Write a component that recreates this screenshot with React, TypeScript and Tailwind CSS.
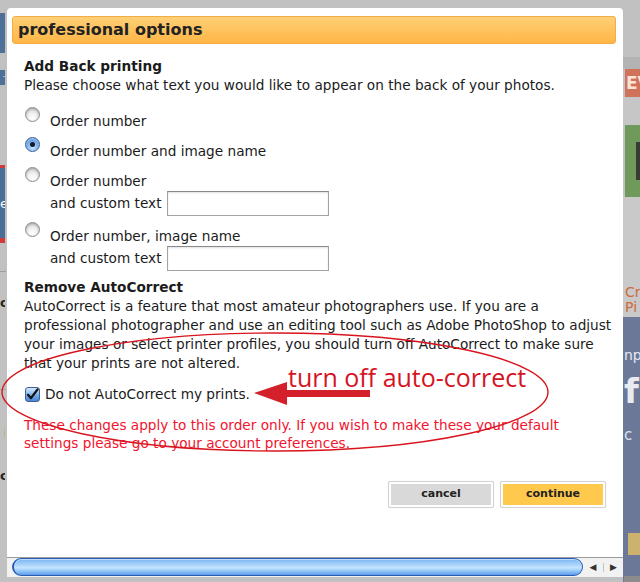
import React from "react";

function Radio({ checked = false }: { checked?: boolean }) {
  if (checked) {
    return (
      <span className="flex h-[15px] w-[15px] shrink-0 items-center justify-center rounded-full border border-[#3d5f95] bg-[radial-gradient(circle_at_50%_75%,#c7e4ff_0%,#7fb6ef_45%,#3f7fd0_100%)] shadow-[inset_0_1px_1px_rgba(255,255,255,0.6)]">
        <span className="h-[5px] w-[5px] rounded-full bg-[#15192a]" />
      </span>
    );
  }
  return (
    <span className="h-[15px] w-[15px] shrink-0 rounded-full border border-[#8c8c8c] bg-[radial-gradient(circle_at_50%_80%,#ffffff_0%,#f1f1f1_40%,#c9c9c9_100%)] shadow-[inset_0_1px_2px_rgba(0,0,0,0.25)]" />
  );
}

function TextBox() {
  return (
    <span className="block h-[25px] w-[162px] border border-[#a3a3a3] border-t-[#8a8a8a] bg-white shadow-[inset_0_1px_2px_rgba(0,0,0,0.12)]" />
  );
}

function Option({ children, checked = false }: { children: React.ReactNode; checked?: boolean }) {
  return (
    <div className="ml-[1px] flex items-start">
      <Radio checked={checked} />
      <div className="ml-[10px] pt-[5px] leading-[19px]">{children}</div>
    </div>
  );
}

function Button({ label, fill }: { label: string; fill: string }) {
  return (
    <div className="h-[27px] w-[106px] rounded-[2px] border border-[#d2d2d2] bg-white p-[2px] shadow-[0_0_1px_rgba(0,0,0,0.15)]">
      <div
        className={`flex h-full w-full items-center justify-center text-[11px] font-bold text-[#222] ${fill}`}
      >
        {label}
      </div>
    </div>
  );
}

function LeftEdge() {
  return (
    <div className="relative flex w-[7px] shrink-0 flex-col overflow-hidden">
      <div className="mt-[13px] h-[40px] w-[5px] bg-[#4d6f98]" />
      <div className="mt-[17px] flex h-[15px] w-[5px] items-center justify-end bg-[#4d6f98] text-[8px] leading-none text-white">
        ·
      </div>
      <div className="mt-[80px] h-[3px] w-[5px] bg-[#d23a3a]" />
      <div className="flex h-[70px] w-[5px] items-center justify-end overflow-hidden bg-[#4b6e97]">
        <span className="-mr-[3px] text-[13px] leading-none text-white">e</span>
      </div>
      <div className="h-[5px] w-[5px] bg-[#d23a3a]" />
      <div className="mt-[28px] h-px w-[6px] bg-[#9e9e9e]" />
      <div className="mt-[24px] w-[5px] overflow-hidden text-right text-[13px] font-bold leading-none text-[#222]">
        <span className="-mr-[4px]">o</span>
      </div>
      <div className="mt-[80px] h-px w-[6px] bg-[#a8a8a8]" />
      <div className="mt-[36px] w-[5px] overflow-hidden text-right text-[13px] leading-none text-[#c9925a]">
        <span className="-mr-[2px]">i</span>
      </div>
      <div className="mt-[30px] w-[5px] overflow-hidden text-right text-[13px] font-bold leading-none text-[#222]">
        <span className="-mr-[4px]">o</span>
      </div>
    </div>
  );
}

function RightEdge() {
  return (
    <div className="flex flex-1 flex-col overflow-hidden">
      <div className="h-[57px]" />
      <div className="h-[12px] bg-[#b3b3b3]" />
      <div className="ml-[2px] flex h-[28px] items-center overflow-hidden whitespace-nowrap bg-[#d1735a] pl-[1px] text-[17px] font-bold leading-none text-[#fbe3d8]">
        EV
      </div>
      <div className="h-[28px] bg-[#c6c6c6]" />
      <div className="ml-[2px] flex h-[72px] items-center justify-end bg-[#6f9a5b]">
        <div className="h-[38px] w-[4px] bg-[#3a3a34]" />
      </div>
      <div className="h-[88px] bg-[#c9c9c9]" />
      <div className="overflow-hidden whitespace-nowrap bg-[#c9c9c9] pl-[2px] text-[14px] leading-[15px] text-[#cf6a3c]">
        <div>Cr</div>
        <div>Pi</div>
      </div>
      <div className="h-[2px] bg-[#c9c9c9]" />
      <div className="flex flex-1 flex-col overflow-hidden whitespace-nowrap bg-[#6b7898] pl-[1px] text-white">
        <div className="mt-[31px] text-[14px] leading-none text-[#e6e9f0]">np</div>
        <div className="mt-[12px] text-[34px] font-bold leading-none text-[#e9ebf0]">f</div>
        <div className="mt-[20px] text-[15px] leading-none text-[#dfe3ea]">c</div>
        <div className="ml-[4px] mt-[90px] h-[22px] bg-[#cbb26e]" />
        <div className="flex-1" />
        <div className="h-[6px] bg-[#8c8c8c]" />
      </div>
    </div>
  );
}

function ScrollBar() {
  return (
    <div className="flex h-[20px] border-t border-[#9c9c9c] bg-[#f2f2f2]">
      <div className="w-[5px]" />
      <div className="h-[18px] flex-1 rounded-full border border-[#2a5db5] border-l-[2px] bg-[linear-gradient(to_bottom,#78b4f2_0%,#a9d3fb_35%,#c6e5ff_55%,#7cb7f3_85%,#5d9be6_100%)] shadow-[inset_0_1px_0_rgba(255,255,255,0.5)]" />
      <div className="flex w-[40px] items-center text-[9px] leading-none text-[#333]">
        <div className="flex w-[21px] items-center justify-center border-r border-[#c4c4c4]">◀</div>
        <div className="flex w-[19px] items-center justify-center">▶</div>
      </div>
    </div>
  );
}

export default function App() {
  return (
    <div className="relative flex h-[582px] w-[640px] overflow-hidden bg-[#c1c1c1] font-['DejaVu_Sans','Liberation_Sans',sans-serif] text-[13.65px] text-[#1b1b1b]">
      <LeftEdge />

      <div className="flex w-[616px] shrink-0 flex-col pt-[8px]">
        {/* dialog */}
        <div className="flex h-[549px] flex-col rounded-t-[4px] bg-white">
          <div className="ml-[5px] mr-[7px] mt-[8px] flex h-[28px] items-center rounded-[3px] border border-[#f2ad47] bg-[linear-gradient(to_bottom,#ffcf76,#ffb646)] pl-[5px] text-[16px] font-bold text-[#222]">
            professional options
          </div>

          <div className="pl-[17px]">
            <div className="mt-[13px] font-bold leading-[19px]">Add Back printing</div>
            <div className="leading-[19px]">
              Please choose what text you would like to appear on the back of your photos.
            </div>

            <div className="mt-[12px] flex flex-col gap-[6px]">
              <Option>Order number</Option>
              <Option checked>Order number and image name</Option>
              <Option>
                <div>Order number</div>
                <div className="flex h-[25px] items-center gap-[5px]">
                  <span>and custom text</span>
                  <TextBox />
                </div>
              </Option>
              <Option>
                <div>Order number, image name</div>
                <div className="flex h-[25px] items-center gap-[5px]">
                  <span>and custom text</span>
                  <TextBox />
                </div>
              </Option>
            </div>

            <div className="mt-[7px] font-bold leading-[19px]">Remove AutoCorrect</div>
            <div className="whitespace-nowrap leading-[19px]">
              <div>AutoCorrect is a feature that most amateur photographers use. If you are a</div>
              <div>professional photographer and use an editing tool such as Adobe PhotoShop to adjust</div>
              <div>your images or select printer profiles, you should turn off AutoCorrect to make sure</div>
              <div>that your prints are not altered.</div>
            </div>

            <div className="ml-[1px] mt-[13px] flex h-[16px] items-center gap-[5px]">
              <span className="flex h-[15px] w-[15px] items-center justify-center rounded-[3px] border border-[#3f5f92] bg-[linear-gradient(to_bottom,#d5ebff,#6fa8e8_60%,#4b86d6)]">
                <svg width="13" height="13" viewBox="0 0 13 13">
                  <path d="M2 6.8 L5 10.2 L11.5 1.5" fill="none" stroke="#111" strokeWidth="2.2" strokeLinecap="round" strokeLinejoin="round" />
                </svg>
              </span>
              <span>Do not AutoCorrect my prints.</span>
            </div>

            <div className="mt-[14px] whitespace-nowrap leading-[18px] text-[#f2142e]">
              <div>These changes apply to this order only. If you wish to make these your default</div>
              <div>settings please go to your account preferences.</div>
            </div>
          </div>

          <div className="mr-[17px] mt-[29px] flex justify-end gap-[6px]">
            <Button label="cancel" fill="bg-[#d9d9d9]" />
            <Button label="continue" fill="bg-[#ffc94e]" />
          </div>
        </div>

        <ScrollBar />
      </div>

      <RightEdge />

      {/* hand-drawn callout over the form */}
      <svg className="pointer-events-none absolute left-0 top-0" width="640" height="582" viewBox="0 0 640 582">
        <ellipse cx="275" cy="392" rx="273" ry="59" fill="none" stroke="#d9141e" strokeWidth="1.4" />
        <polygon points="254,393 287,382 287,390 370,390 370,397 287,397 287,405" fill="#d3202a" />
      </svg>
      <div className="pointer-events-none absolute left-[288px] top-[362px] font-['Open_Sans',sans-serif] text-[25px] leading-[30px] text-[#d5141f]">
        turn off auto-correct
      </div>
    </div>
  );
}
